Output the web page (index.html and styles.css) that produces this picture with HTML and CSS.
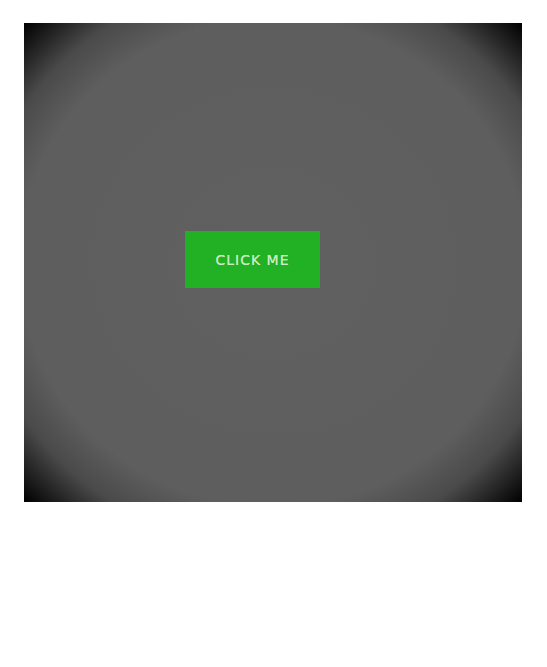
FILE: index.html
```html
<!DOCTYPE html>
<html>
<head>
<meta charset="utf-8">
<link rel="stylesheet" href="styles.css">
</head>
<body>
<div class="stage">
  <button class="btn">CLICK ME</button>
</div>
</body>
</html>
```
FILE: styles.css
```css
html, body { margin: 0; padding: 0; background: #fff; }
body { padding: 23px 0 0 24px; }
.stage {
  width: 498px;
  height: 479px;
  box-sizing: border-box;
  padding: 208px 0 0 161px;
  background: radial-gradient(ellipse farthest-corner at center, #606060 0%, #5e5e5e 72%, #4a4a4a 84%, #000 100%);
}
.btn {
  display: flex;
  align-items: center;
  justify-content: center;
  width: 135px;
  height: 57px;
  border: 0;
  margin: 0;
  padding: 0 0 0 0;
  background: #22b025;
  color: #c6ecc0;
  font-family: "DejaVu Sans", Verdana, sans-serif;
  font-size: 14px;
  letter-spacing: 1px;
  text-shadow: 0 0 0.4px #c6ecc0;
}
```
